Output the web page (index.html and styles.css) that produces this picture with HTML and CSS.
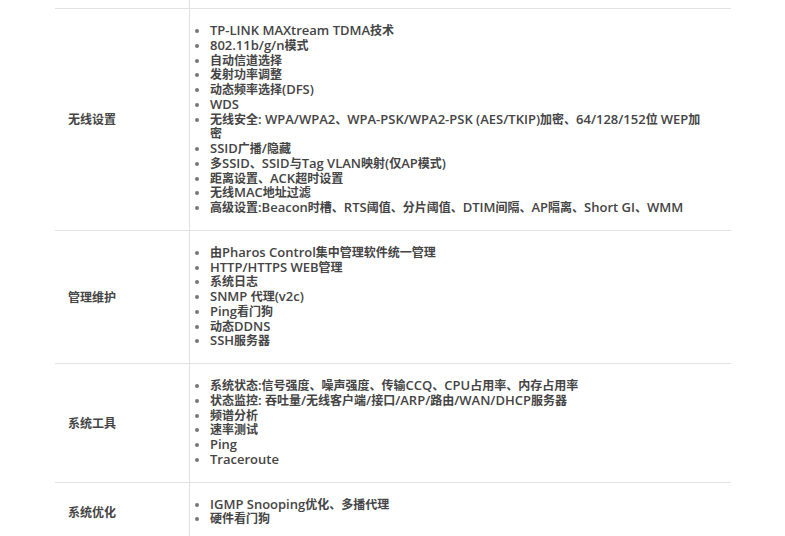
FILE: index.html
```html
<!DOCTYPE html>
<html lang="zh-CN">
<head>
<meta charset="utf-8">
<title>规格</title>
<link rel="stylesheet" href="styles.css">
</head>
<body>
<div class="spec">
  <div class="row top"><div class="label"></div><div class="value"></div></div>
  <div class="row">
    <div class="label">无线设置</div>
    <div class="value">
      <ul>
        <li><span class="en">TP-LINK MAXtream TDMA</span>技术</li>
        <li><span class="en">802.11b/g/n</span>模式</li>
        <li>自动信道选择</li>
        <li>发射功率调整</li>
        <li>动态频率选择<span class="en">(DFS)</span></li>
        <li><span class="en">WDS</span></li>
        <li>无线安全<span class="en">: WPA/WPA2</span>、<span class="en">WPA-PSK/WPA2-PSK (AES/TKIP)</span>加密、<span class="en">64/128/152</span>位 <span class="en">WEP</span>加密</li>
        <li><span class="en">SSID</span>广播<span class="en">/</span>隐藏</li>
        <li>多<span class="en">SSID</span>、<span class="en">SSID</span>与<span class="en">Tag VLAN</span>映射<span class="en">(</span>仅<span class="en">AP</span>模式<span class="en">)</span></li>
        <li>距离设置、<span class="en">ACK</span>超时设置</li>
        <li>无线<span class="en">MAC</span>地址过滤</li>
        <li>高级设置<span class="en">:Beacon</span>时槽、<span class="en">RTS</span>阈值、分片阈值、<span class="en">DTIM</span>间隔、<span class="en">AP</span>隔离、<span class="en">Short GI</span>、<span class="en">WMM</span></li>
      </ul>
    </div>
  </div>
  <div class="row">
    <div class="label">管理维护</div>
    <div class="value">
      <ul>
        <li>由<span class="en">Pharos Control</span>集中管理软件统一管理</li>
        <li><span class="en">HTTP/HTTPS WEB</span>管理</li>
        <li>系统日志</li>
        <li><span class="en">SNMP </span>代理<span class="en">(v2c)</span></li>
        <li><span class="en">Ping</span>看门狗</li>
        <li>动态<span class="en">DDNS</span></li>
        <li><span class="en">SSH</span>服务器</li>
      </ul>
    </div>
  </div>
  <div class="row">
    <div class="label">系统工具</div>
    <div class="value">
      <ul>
        <li>系统状态<span class="en">:</span>信号强度、噪声强度、传输<span class="en">CCQ</span>、<span class="en">CPU</span>占用率、内存占用率</li>
        <li>状态监控<span class="en">: </span>吞吐量<span class="en">/</span>无线客户端<span class="en">/</span>接口<span class="en">/ARP/</span>路由<span class="en">/WAN/DHCP</span>服务器</li>
        <li>频谱分析</li>
        <li>速率测试</li>
        <li><span class="en">Ping</span></li>
        <li><span class="en">Traceroute</span></li>
      </ul>
    </div>
  </div>
  <div class="row">
    <div class="label">系统优化</div>
    <div class="value">
      <ul>
        <li><span class="en">IGMP Snooping</span>优化、多播代理</li>
        <li>硬件看门狗</li>
      </ul>
    </div>
  </div>
</div>
</body>
</html>
```
FILE: styles.css
```css
html, body {
  margin: 0;
  padding: 0;
  background: #fff;
}
body {
  font-family: "Open Sans", "Noto Sans CJK SC", sans-serif;
  font-size: 12px;
  color: #444;
}
.spec {
  width: 676px;
  margin-left: 55px;
}
.row {
  display: grid;
  grid-template-columns: 134px 1fr;
  border-bottom: 1px solid #e2e2e2;
}
.row.top {
  height: 8px;
}
.label {
  display: flex;
  align-items: center;
  padding-left: 13px;
  font-weight: 600;
}
.value {
  border-left: 1px solid #e2e2e2;
  padding: 15px 21px 14px 0;
}
.row.top .value {
  padding: 0;
}
ul {
  margin: 0;
  padding-left: 20px;
  list-style: disc;
  font-weight: 600;
  line-height: 14.75px;
}
.en {
  font-size: 13px;
  line-height: 1;
}
li::marker {
  color: #777;
}
```
